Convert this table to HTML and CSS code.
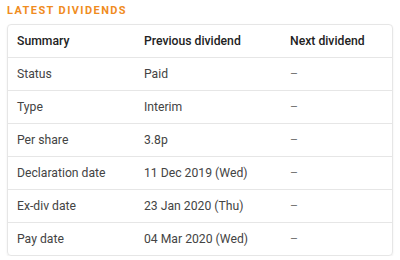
FILE: index.html
```html
<!DOCTYPE html>
<html>
<head>
<meta charset="utf-8">
<link rel="stylesheet" href="styles.css">
</head>
<body>
<h2 class="title">LATEST DIVIDENDS</h2>
<div class="card">
  <div class="row head">
    <div>Summary</div><div>Previous dividend</div><div>Next dividend</div>
  </div>
  <div class="row"><div>Status</div><div>Paid</div><div class="dash">–</div></div>
  <div class="row"><div>Type</div><div>Interim</div><div class="dash">–</div></div>
  <div class="row"><div>Per share</div><div>3.8p</div><div class="dash">–</div></div>
  <div class="row"><div>Declaration date</div><div>11 Dec 2019 (Wed)</div><div class="dash">–</div></div>
  <div class="row"><div>Ex-div date</div><div>23 Jan 2020 (Thu)</div><div class="dash">–</div></div>
  <div class="row"><div>Pay date</div><div>04 Mar 2020 (Wed)</div><div class="dash">–</div></div>
</div>
</body>
</html>
```
FILE: styles.css
```css
body {
  margin: 0;
  padding: 5px 7px 0 7px;
  background: #fff;
  font-family: Roboto, "Noto Sans", sans-serif;
}
.title {
  margin: 0 0 8px 0;
  font-size: 11px;
  font-weight: 700;
  letter-spacing: 1.4px;
  color: #f08c1e;
  line-height: 11px;
}
.card {
  width: 384px;
  border: 1px solid #e6e6e6;
  border-radius: 4px;
  box-shadow: 0 1px 2px rgba(0,0,0,0.08);
}
.row {
  display: grid;
  grid-template-columns: 127px 146px 1fr;
  height: 32px;
  align-items: center;
  border-top: 1px solid #e6e6e6;
  font-size: 12.2px;
  color: #444;
}
.row > div { padding-left: 9px; }
.row.head { border-top: none; color: #222; font-weight: 500; }
.dash { color: #777; }
```
